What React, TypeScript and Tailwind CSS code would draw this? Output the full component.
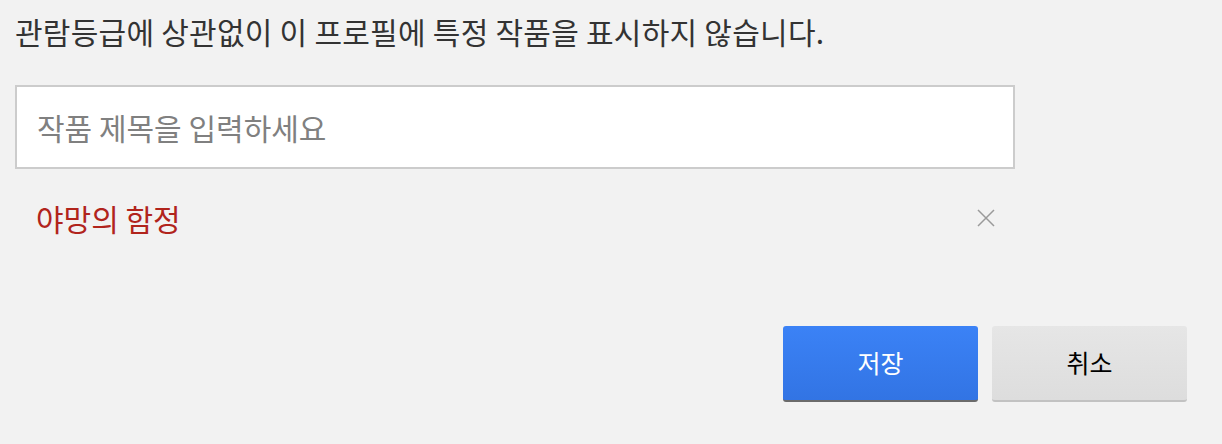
export default function App() {
  const font = { fontFamily: '"Noto Sans CJK KR", "Noto Sans", sans-serif' };

  return (
    <div className="w-[1222px] h-[444px] bg-[#f2f2f2] overflow-hidden" style={font}>
      <div className="pl-[15px] pt-[11px]">
        {/* Description */}
        <p className="text-[30px] leading-[40px] text-[#333] tracking-[0.25px]">
          관람등급에 상관없이 이 프로필에 특정 작품을 표시하지 않습니다.
        </p>

        {/* Title input */}
        <div className="mt-[34px] w-[1000px] h-[84px] bg-white border-2 border-[#cccccc] flex items-center px-[20px]">
          <span className="text-[30px] text-[#808080]">작품 제목을 입력하세요</span>
        </div>

        {/* Selected title */}
        <div className="w-[1000px] h-[100px] flex items-center justify-between pl-[21px] pr-[20px]">
          <span className="text-[30px] text-[#b1241c] -mt-[2px]">야망의 함정</span>
          <svg width="18" height="18" viewBox="0 0 18 18" className="-mt-[2px]">
            <path d="M1 1 L17 17 M17 1 L1 17" stroke="#9a9a9a" strokeWidth="1.5" fill="none" />
          </svg>
        </div>
      </div>

      {/* Actions */}
      <div className="flex justify-end gap-[14px] pr-[35px] mt-[57px]">
        <button className="w-[195px] h-[76px] rounded-[3px] bg-gradient-to-b from-[#3b82f6] to-[#3274e4] border-b-2 border-[#6b6b6b] text-white text-[25px]">
          저장
        </button>
        <button className="w-[195px] h-[76px] rounded-[3px] bg-gradient-to-b from-[#e6e6e6] to-[#dddddd] border-b-2 border-[#c2c2c2] text-black text-[25px]">
          취소
        </button>
      </div>
    </div>
  );
}
